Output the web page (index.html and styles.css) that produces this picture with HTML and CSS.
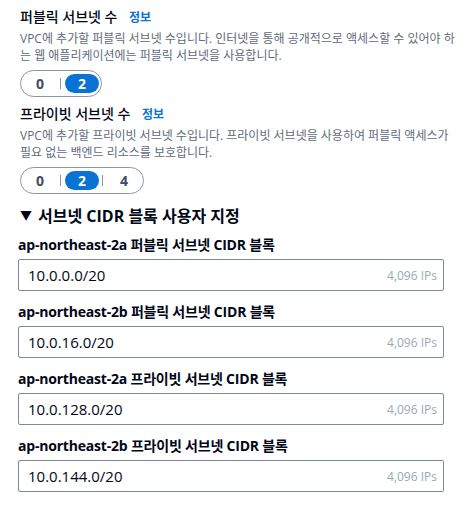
FILE: index.html
```html
<!DOCTYPE html>
<html lang="ko">
<head>
<meta charset="utf-8">
<link rel="stylesheet" href="styles.css">
</head>
<body>
<div class="page">
  <section class="field">
    <div class="field-label">퍼블릭 서브넷 수 <a class="info">정보</a></div>
    <p class="desc">VPC에 추가할 퍼블릭 서브넷 수입니다. 인터넷을 통해 공개적으로 액세스할 수 있어야 하<br>는 웹 애플리케이션에는 퍼블릭 서브넷을 사용합니다.</p>
    <div class="seg">
      <span class="seg-item">0</span>
      <span class="seg-div"></span>
      <span class="seg-item selected">2</span>
    </div>
  </section>
  <section class="field second">
    <div class="field-label">프라이빗 서브넷 수 <a class="info">정보</a></div>
    <p class="desc">VPC에 추가할 프라이빗 서브넷 수입니다. 프라이빗 서브넷을 사용하여 퍼블릭 액세스가<br>필요 없는 백엔드 리소스를 보호합니다.</p>
    <div class="seg">
      <span class="seg-item">0</span>
      <span class="seg-div"></span>
      <span class="seg-item selected">2</span>
      <span class="seg-div"></span>
      <span class="seg-item">4</span>
    </div>
  </section>
  <h2 class="expander"><span class="caret">▼</span>서브넷 CIDR 블록 사용자 지정</h2>
  <div class="cidr-list">
    <div class="cidr">
      <div class="cidr-label">ap-northeast-2a 퍼블릭 서브넷 CIDR 블록</div>
      <div class="input"><span class="value">10.0.0.0/20</span><span class="hint">4,096 IPs</span></div>
    </div>
    <div class="cidr">
      <div class="cidr-label">ap-northeast-2b 퍼블릭 서브넷 CIDR 블록</div>
      <div class="input"><span class="value">10.0.16.0/20</span><span class="hint">4,096 IPs</span></div>
    </div>
    <div class="cidr">
      <div class="cidr-label">ap-northeast-2a 프라이빗 서브넷 CIDR 블록</div>
      <div class="input"><span class="value">10.0.128.0/20</span><span class="hint">4,096 IPs</span></div>
    </div>
    <div class="cidr">
      <div class="cidr-label">ap-northeast-2b 프라이빗 서브넷 CIDR 블록</div>
      <div class="input"><span class="value">10.0.144.0/20</span><span class="hint">4,096 IPs</span></div>
    </div>
  </div>
</div>
</body>
</html>
```

FILE: styles.css
```css
* { box-sizing: border-box; }
html, body { margin: 0; padding: 0; background: #ffffff; }
body {
  font-family: "Open Sans", "Noto Sans CJK KR", sans-serif;
  color: #000716;
  width: 473px;
  height: 508px;
  overflow: hidden;
}
.page {
  padding: 7px 0 0 18px;
}
.field { padding-left: 2px; }
.field.second { margin-top: 7px; }
.field-label {
  font-size: 14px;
  line-height: 20px;
  font-weight: 500;
  color: #000716;
}
.info {
  margin-left: 8px;
  font-size: 12px;
  font-weight: 700;
  color: #0972d3;
}
.desc {
  margin: 2px 0 0 0;
  font-size: 12px;
  line-height: 17px;
  color: #5f6b7a;
  white-space: nowrap;
}
.seg {
  margin-top: 6px;
  display: inline-flex;
  align-items: center;
  height: 27px;
  padding: 0 2px;
  border: 1px solid #8c96a3;
  border-radius: 14px;
}
.seg-item {
  width: 34px;
  height: 19px;
  border-radius: 10px;
  display: flex;
  align-items: center;
  justify-content: center;
  font-size: 14px;
  font-weight: 700;
  color: #414d5c;
}
.seg-item.selected {
  background: #0972d3;
  color: #ffffff;
}
.seg-div {
  width: 1px;
  height: 11px;
  background: #8c96a3;
  margin: 0 4px 0 3px;
}
.expander {
  margin: 11px 0 0 2px;
  font-size: 16px;
  line-height: 22px;
  font-weight: 700;
  color: #000716;
  display: flex;
  align-items: center;
}
.caret {
  font-size: 12px;
  margin-right: 6px;
}
.cidr-list {
  margin-top: 7px;
  display: flex;
  flex-direction: column;
  gap: 10px;
}
.cidr-label {
  font-size: 14px;
  line-height: 22px;
  font-weight: 700;
  letter-spacing: -0.2px;
  color: #000716;
}
.input {
  margin-top: 3px;
  width: 426px;
  height: 32px;
  border: 1px solid #7d8998;
  border-radius: 2px;
  display: flex;
  align-items: center;
  justify-content: space-between;
  padding: 0 6px 0 9px;
}
.value {
  font-size: 15px;
  color: #000716;
}
.hint {
  font-size: 12px;
  color: #9ba7b6;
}
```
